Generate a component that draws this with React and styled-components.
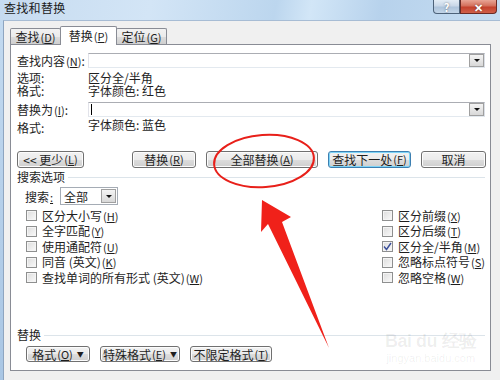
import React from "react";
import styled, { createGlobalStyle } from "styled-components";

const GlobalStyle = createGlobalStyle`
  html, body { margin: 0; padding: 0; }
  body {
    width: 500px;
    height: 380px;
    overflow: hidden;
    font-family: "Noto Sans CJK SC", "Liberation Sans", sans-serif;
    font-size: 12px;
    color: #1e1e1e;
  }
`;

const Win = styled.div`
  position: relative;
  width: 500px;
  height: 380px;
  display: flex;
  flex-direction: column;
  background: linear-gradient(180deg, #c4dbf1 0%, #a9c6e4 100%);
  overflow: hidden;
`;

const TitleBar = styled.div`
  height: 20px;
  flex: none;
  display: flex;
  align-items: flex-start;
  padding-left: 4px;
  background: linear-gradient(
    100deg,
    #c6dbf0 0%,
    #d3e5f6 30%,
    #bcd6ee 55%,
    #d2e6f7 62%,
    #b7d2ec 76%,
    #c5dcf1 100%
  );
`;

const Title = styled.div`
  flex: 1;
  line-height: 16px;
  font-size: 12px;
  color: #1b1b1b;
  letter-spacing: 0.3px;
`;

const CaptionBtn = styled.div`
  width: ${(p) => p.$w}px;
  height: 14px;
  box-sizing: border-box;
  border: 1px solid ${(p) => (p.$close ? "#6b2a24" : "#4d6279")};
  border-top: none;
  display: flex;
  align-items: center;
  justify-content: center;
  color: #fff;
  font-size: 11px;
  font-weight: bold;
  line-height: 12px;
  background: ${(p) =>
    p.$close
      ? "linear-gradient(180deg, #e8a595 0%, #d4705c 45%, #c4412c 55%, #d0604a 100%)"
      : "linear-gradient(180deg, #e3ecf5 0%, #c9d8e8 45%, #aec4db 55%, #c2d5e8 100%)"};
  border-radius: ${(p) => (p.$close ? "0 0 4px 0" : "0 0 0 4px")};
  margin-right: ${(p) => (p.$close ? 3 : 0)}px;
  text-shadow: 0 0 2px rgba(0, 0, 0, 0.5);
`;

const Body = styled.div`
  flex: 1;
  margin-left: 3px;
  background: #f0f0f0;
  border-left: 1px solid #8ea5c0;
  border-top: 1px solid #a7bcd4;
  padding: 5px 9px 9px 6px;
  display: flex;
  flex-direction: column;
`;

const TabRow = styled.div`
  display: flex;
  align-items: flex-end;
  height: 19px;
  margin-bottom: -1px;
  position: relative;
  z-index: 2;
`;

const Tab = styled.div`
  box-sizing: border-box;
  width: ${(p) => p.$w}px;
  height: ${(p) => (p.$active ? 19 : 16)}px;
  margin-bottom: ${(p) => (p.$active ? 0 : 1)}px;
  margin-left: ${(p) => (p.$first ? 0 : -1)}px;
  border: 1px solid #898c95;
  border-bottom: none;
  border-radius: 2px 2px 0 0;
  background: ${(p) =>
    p.$active
      ? "#fff"
      : "linear-gradient(180deg, #f2f2f2 0%, #ebebeb 50%, #dddddd 51%, #cfcfcf 100%)"};
  display: flex;
  align-items: center;
  justify-content: center;
  line-height: 14px;
  padding-top: ${(p) => (p.$active ? 0 : 1)}px;
  position: relative;
  z-index: ${(p) => (p.$active ? 3 : 1)};
`;

const Panel = styled.div`
  flex: 1;
  background: #fff;
  border: 1px solid #898c95;
  padding: 8px 5px 8px 6px;
  display: flex;
  flex-direction: column;
`;

const FieldRow = styled.div`
  display: grid;
  grid-template-columns: 71px 1fr;
  align-items: center;
  height: 15px;
  margin-top: ${(p) => p.$mt || 0}px;
`;

const Label = styled.div`
  line-height: 13px;
  white-space: nowrap;
  padding-top: ${(p) => p.$drop || 0}px;
`;

const Combo = styled.div`
  height: 15px;
  box-sizing: border-box;
  border: 1px solid #abadb3;
  border-color: #abadb3 #dbdfe6 #e3e9ef #e2e3ea;
  background: #fff;
  display: flex;
  align-items: center;
`;

const Caret = styled.span`
  width: 1px;
  height: 11px;
  background: #000;
  margin-left: 2px;
`;

const DropBtn = styled.div`
  margin-left: auto;
  width: ${(p) => p.$w || 15}px;
  height: ${(p) => p.$h || 13}px;
  box-sizing: border-box;
  border: 1px solid #a0a0a0;
  background: linear-gradient(180deg, #f4f4f4 0%, #e6e6e6 50%, #d8d8d8 100%);
  display: flex;
  align-items: center;
  justify-content: center;
  &::after {
    content: "";
    border-left: 3px solid transparent;
    border-right: 3px solid transparent;
    border-top: 3px solid #111;
  }
`;

const InfoRow = styled.div`
  display: grid;
  grid-template-columns: 71px 1fr;
  align-items: start;
  line-height: 13px;
  margin-top: ${(p) => p.$mt || 0}px;
`;

const ButtonRow = styled.div`
  display: flex;
  gap: 10px;
  margin-top: ${(p) => p.$mt || 0}px;
  padding-left: ${(p) => p.$pl || 0}px;
`;

const Btn = styled.div`
  box-sizing: border-box;
  width: ${(p) => p.$w}px;
  height: ${(p) => p.$h || 17}px;
  margin-right: ${(p) => p.$mr || 0}px;
  border: 1px solid ${(p) => (p.$default ? "#3c7fb1" : "#707070")};
  border-radius: 3px;
  background: linear-gradient(180deg, #f2f2f2 0%, #ebebeb 50%, #dddddd 51%, #cfcfcf 100%);
  box-shadow: inset 0 0 0 1px ${(p) => (p.$default ? "#7ed4f7" : "#fcfcfc")};
  display: flex;
  align-items: center;
  justify-content: center;
  line-height: 13px;
  white-space: nowrap;
`;

const GroupHead = styled.div`
  display: flex;
  align-items: center;
  height: 14px;
  line-height: 14px;
  margin-top: ${(p) => p.$mt || 0}px;
  &::after {
    content: "";
    flex: 1;
    height: 1px;
    margin-left: 3px;
    margin-top: 1px;
    background: #dce4ea;
  }
`;

const SearchRow = styled.div`
  display: flex;
  align-items: center;
  margin-top: 3px;
  padding-left: 8px;
`;

const SearchLabel = styled.div`
  width: 35px;
`;

const Select = styled.div`
  width: 58px;
  height: 18px;
  box-sizing: border-box;
  border: 1px solid #a5acb5;
  background: #fff;
  display: flex;
  align-items: center;
  padding-left: 3px;
  padding-right: 1px;
`;

const Options = styled.div`
  display: grid;
  grid-template-columns: 356px 1fr;
  grid-auto-flow: column;
  grid-template-rows: repeat(5, 15.5px);
  margin-top: 3px;
  padding-left: 9px;
`;

const CheckRow = styled.div`
  display: flex;
  align-items: center;
  gap: 5px;
  white-space: nowrap;
  line-height: 13px;
`;

const Box = styled.div`
  width: 11px;
  height: 11px;
  box-sizing: border-box;
  border: 1px solid #8e8f8f;
  background: linear-gradient(135deg, #dcdcdc 0%, #f4f4f4 80%, #fbfbfb 100%);
  box-shadow: inset 0 0 0 1px #f4f4f4;
  display: flex;
  align-items: center;
  justify-content: center;
`;

const Spacer = styled.div`
  flex: 1;
`;

const Key = styled.span`
  font-size: 11px;
  margin-left: 1px;
  u {
    text-decoration: underline;
  }
`;

const Arrow = styled.span`
  font-size: 7px;
  margin-left: 4px;
`;

const Overlay = styled.svg`
  position: absolute;
  left: 0;
  top: 0;
  pointer-events: none;
`;

const Watermark = styled.div`
  position: absolute;
  left: 385px;
  top: 330px;
  color: rgba(0, 0, 0, 0.07);
  font-family: "Liberation Sans", sans-serif;
  pointer-events: none;
  display: flex;
  flex-direction: column;
  align-items: center;
`;

const MarkTop = styled.div`
  font-size: 18px;
  font-weight: bold;
  letter-spacing: -0.5px;
  line-height: 22px;
`;

const MarkUrl = styled.div`
  font-size: 11px;
  line-height: 12px;
`;

const K = ({ k }) => (
  <Key>
    (<u>{k}</u>)
  </Key>
);

const Check = ({ label, k, checked }) => (
  <CheckRow>
    <Box>
      {checked && (
        <svg width="9" height="9" viewBox="0 0 9 9">
          <path d="M1 4.5 L3.5 7.5 L8 1" stroke="#3b4f9a" strokeWidth="1.4" fill="none" />
        </svg>
      )}
    </Box>
    <span>
      {label}
      <K k={k} />
    </span>
  </CheckRow>
);

export default function App() {
  return (
    <Win>
      <GlobalStyle />
      <TitleBar>
        <Title>查找和替换</Title>
        <CaptionBtn $w={27}>?</CaptionBtn>
        <CaptionBtn $w={37} $close>
          ✕
        </CaptionBtn>
      </TitleBar>
      <Body>
        <TabRow>
          <Tab $w={51} $first>
            查找<K k="D" />
          </Tab>
          <Tab $w={57} $active>
            替换<K k="P" />
          </Tab>
          <Tab $w={51}>
            定位<K k="G" />
          </Tab>
        </TabRow>
        <Panel>
          <FieldRow>
            <Label>
              查找内容<K k="N" />:
            </Label>
            <Combo>
              <DropBtn />
            </Combo>
          </FieldRow>
          <InfoRow $mt={3}>
            <Label>选项:</Label>
            <div>区分全/半角</div>
          </InfoRow>
          <InfoRow>
            <Label>格式:</Label>
            <div>字体颜色: 红色</div>
          </InfoRow>
          <FieldRow $mt={5}>
            <Label>
              替换为<K k="I" />:
            </Label>
            <Combo>
              <Caret />
              <DropBtn />
            </Combo>
          </FieldRow>
          <InfoRow $mt={1}>
            <Label $drop={3}>格式:</Label>
            <div>字体颜色: 蓝色</div>
          </InfoRow>
          <ButtonRow $mt={17}>
            <Btn $w={67} $mr={38}>
              &lt;&lt; 更少<K k="L" />
            </Btn>
            <Btn $w={64}>
              替换<K k="R" />
            </Btn>
            <Btn $w={112}>
              全部替换<K k="A" />
            </Btn>
            <Btn $w={83} $default>
              查找下一处<K k="F" />
            </Btn>
            <Btn $w={65} $mr={-2}>
              取消
            </Btn>
          </ButtonRow>
          <GroupHead $mt={2}>搜索选项</GroupHead>
          <SearchRow>
            <SearchLabel>
              搜索<Key><u>:</u></Key>
            </SearchLabel>
            <Select>
              全部
              <DropBtn $w={15} $h={14} />
            </Select>
          </SearchRow>
          <Options>
            <Check label="区分大小写" k="H" />
            <Check label="全字匹配" k="Y" />
            <Check label="使用通配符" k="U" />
            <Check label="同音 (英文)" k="K" />
            <Check label="查找单词的所有形式 (英文)" k="W" />
            <Check label="区分前缀" k="X" />
            <Check label="区分后缀" k="T" />
            <Check label="区分全/半角" k="M" checked />
            <Check label="忽略标点符号" k="S" />
            <Check label="忽略空格" k="W" />
          </Options>
          <Spacer />
          <GroupHead>替换</GroupHead>
          <ButtonRow $mt={4} $pl={9}>
            <Btn $w={64} $h={16}>
              格式<K k="O" />
              <Arrow>▼</Arrow>
            </Btn>
            <Btn $w={80} $h={16}>
              特殊格式<K k="E" />
              <Arrow>▼</Arrow>
            </Btn>
            <Btn $w={82} $h={16}>
              不限定格式<K k="T" />
            </Btn>
          </ButtonRow>
        </Panel>
      </Body>

      <Watermark>
        <MarkTop>Bai du 经验</MarkTop>
        <MarkUrl>jingyan.baidu.com</MarkUrl>
      </Watermark>

      <Overlay width="500" height="380" viewBox="0 0 500 380">
        <ellipse
          cx="264"
          cy="161"
          rx="50"
          ry="26"
          fill="none"
          stroke="#e8201a"
          strokeWidth="2"
          transform="rotate(-4 264 161)"
        />
        <polygon
          points="262,200 291,217 282,222 329,348 268,224 261,232"
          fill="#f0211a"
        />
      </Overlay>
    </Win>
  );
}
